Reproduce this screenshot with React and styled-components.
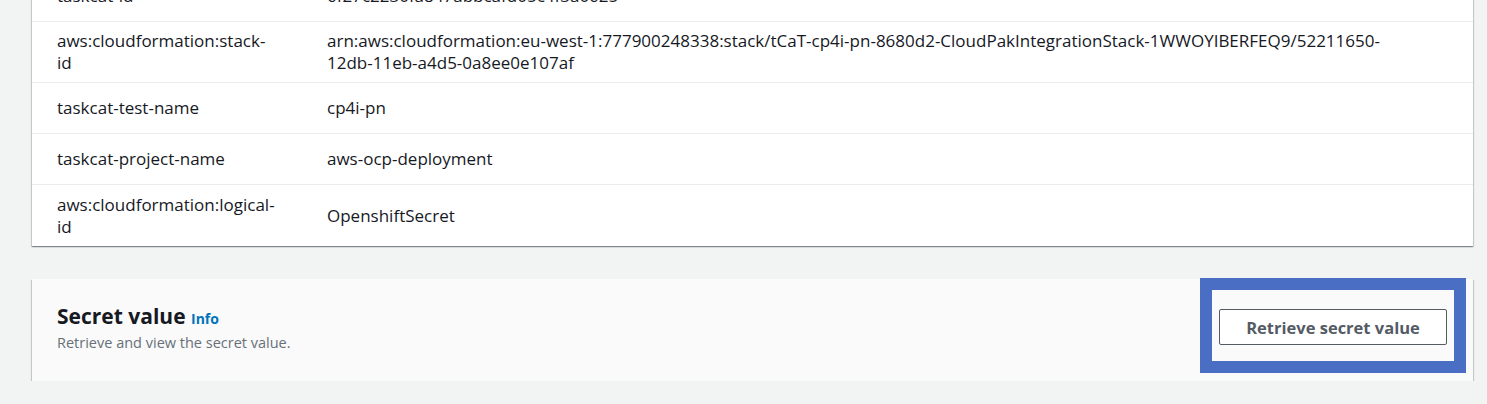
import React from "react";
import styled, { createGlobalStyle } from "styled-components";

const tags = [
  { key: "taskcat-id", value: "6f27c2230fa847abbcafd05c4f3a0625" },
  {
    key: ["aws:cloudformation:stack-", "id"],
    value: [
      "arn:aws:cloudformation:eu-west-1:777900248338:stack/tCaT-cp4i-pn-8680d2-CloudPakIntegrationStack-1WWOYIBERFEQ9/52211650-",
      "12db-11eb-a4d5-0a8ee0e107af"
    ]
  },
  { key: "taskcat-test-name", value: "cp4i-pn" },
  { key: "taskcat-project-name", value: "aws-ocp-deployment" },
  { key: ["aws:cloudformation:logical-", "id"], value: "OpenshiftSecret" }
];

const lines = text =>
  Array.isArray(text)
    ? text.map((t, i) => (
        <React.Fragment key={i}>
          {i > 0 && <br />}
          {t}
        </React.Fragment>
      ))
    : text;

export default function App() {
  return (
    <>
      <GlobalStyle />
      <Page>
        <TagsCard>
          {tags.map((tag, i) => (
            <Row key={i} $last={i === tags.length - 1}>
              <KeyCell>{lines(tag.key)}</KeyCell>
              <ValueCell>{lines(tag.value)}</ValueCell>
            </Row>
          ))}
        </TagsCard>

        <SecretCard>
          <HeaderText>
            <Title>
              Secret value <InfoLink href="#">Info</InfoLink>
            </Title>
            <Description>Retrieve and view the secret value.</Description>
          </HeaderText>
          <Highlighted>
            <Button type="button">Retrieve secret value</Button>
          </Highlighted>
        </SecretCard>
      </Page>
    </>
  );
}

const GlobalStyle = createGlobalStyle`
  html, body {
    margin: 0;
    padding: 0;
    background: #f2f3f3;
    overflow: hidden;
  }
  body {
    font-family: "Open Sans", "Noto Sans", sans-serif;
    color: #16191f;
  }
`;

const Page = styled.div`
  padding: 0 14px 0 32px;
  display: flex;
  flex-direction: column;
  gap: 33px;
`;

const TagsCard = styled.div`
  margin-top: -29px;
  background: #ffffff;
  box-shadow: 0 1px 1px 0 rgba(0, 28, 36, 0.3),
    1px 1px 1px 0 rgba(0, 28, 36, 0.15),
    -1px 1px 1px 0 rgba(0, 28, 36, 0.15);
`;

const Row = styled.div`
  display: flex;
  align-items: center;
  box-sizing: border-box;
  min-height: ${p => (p.$last ? "61px" : "51px")};
  padding: 8px 0 8px 25px;
  border-bottom: ${p => (p.$last ? "none" : "1px solid #eaeded")};
  font-size: 17px;
  line-height: 22px;
`;

const KeyCell = styled.div`
  flex: 0 0 270px;
  white-space: nowrap;
`;

const ValueCell = styled.div`
  flex: 1 1 auto;
  white-space: nowrap;
`;

const SecretCard = styled.div`
  box-sizing: border-box;
  height: 102px;
  padding: 24px 26px 30px 25px;
  display: flex;
  align-items: center;
  justify-content: space-between;
  background: #fafafa;
  box-shadow: 0 1px 1px 0 rgba(0, 28, 36, 0.3),
    1px 1px 1px 0 rgba(0, 28, 36, 0.15),
    -1px 1px 1px 0 rgba(0, 28, 36, 0.15);
`;

const HeaderText = styled.div`
  display: flex;
  flex-direction: column;
`;

const Title = styled.h2`
  margin: 0;
  font-size: 21px;
  line-height: 28px;
  font-weight: 700;
  color: #16191f;
`;

const InfoLink = styled.a`
  font-size: 14px;
  font-weight: 700;
  color: #0073bb;
  text-decoration: none;
`;

const Description = styled.p`
  margin: 0;
  font-size: 14.5px;
  line-height: 20px;
  color: #687078;
`;

const Highlighted = styled.div`
  position: relative;

  &::before {
    content: "";
    position: absolute;
    top: -31px;
    left: -19px;
    right: -19px;
    bottom: -28px;
    border: 12px solid #4a6ec4;
    pointer-events: none;
  }
`;

const Button = styled.button`
  box-sizing: border-box;
  width: 228px;
  height: 36px;
  border: 1px solid #545b64;
  border-radius: 2px;
  background: #ffffff;
  color: #545b64;
  font-family: "Open Sans", "Noto Sans", sans-serif;
  font-size: 16.5px;
  font-weight: 700;
  cursor: pointer;
`;
